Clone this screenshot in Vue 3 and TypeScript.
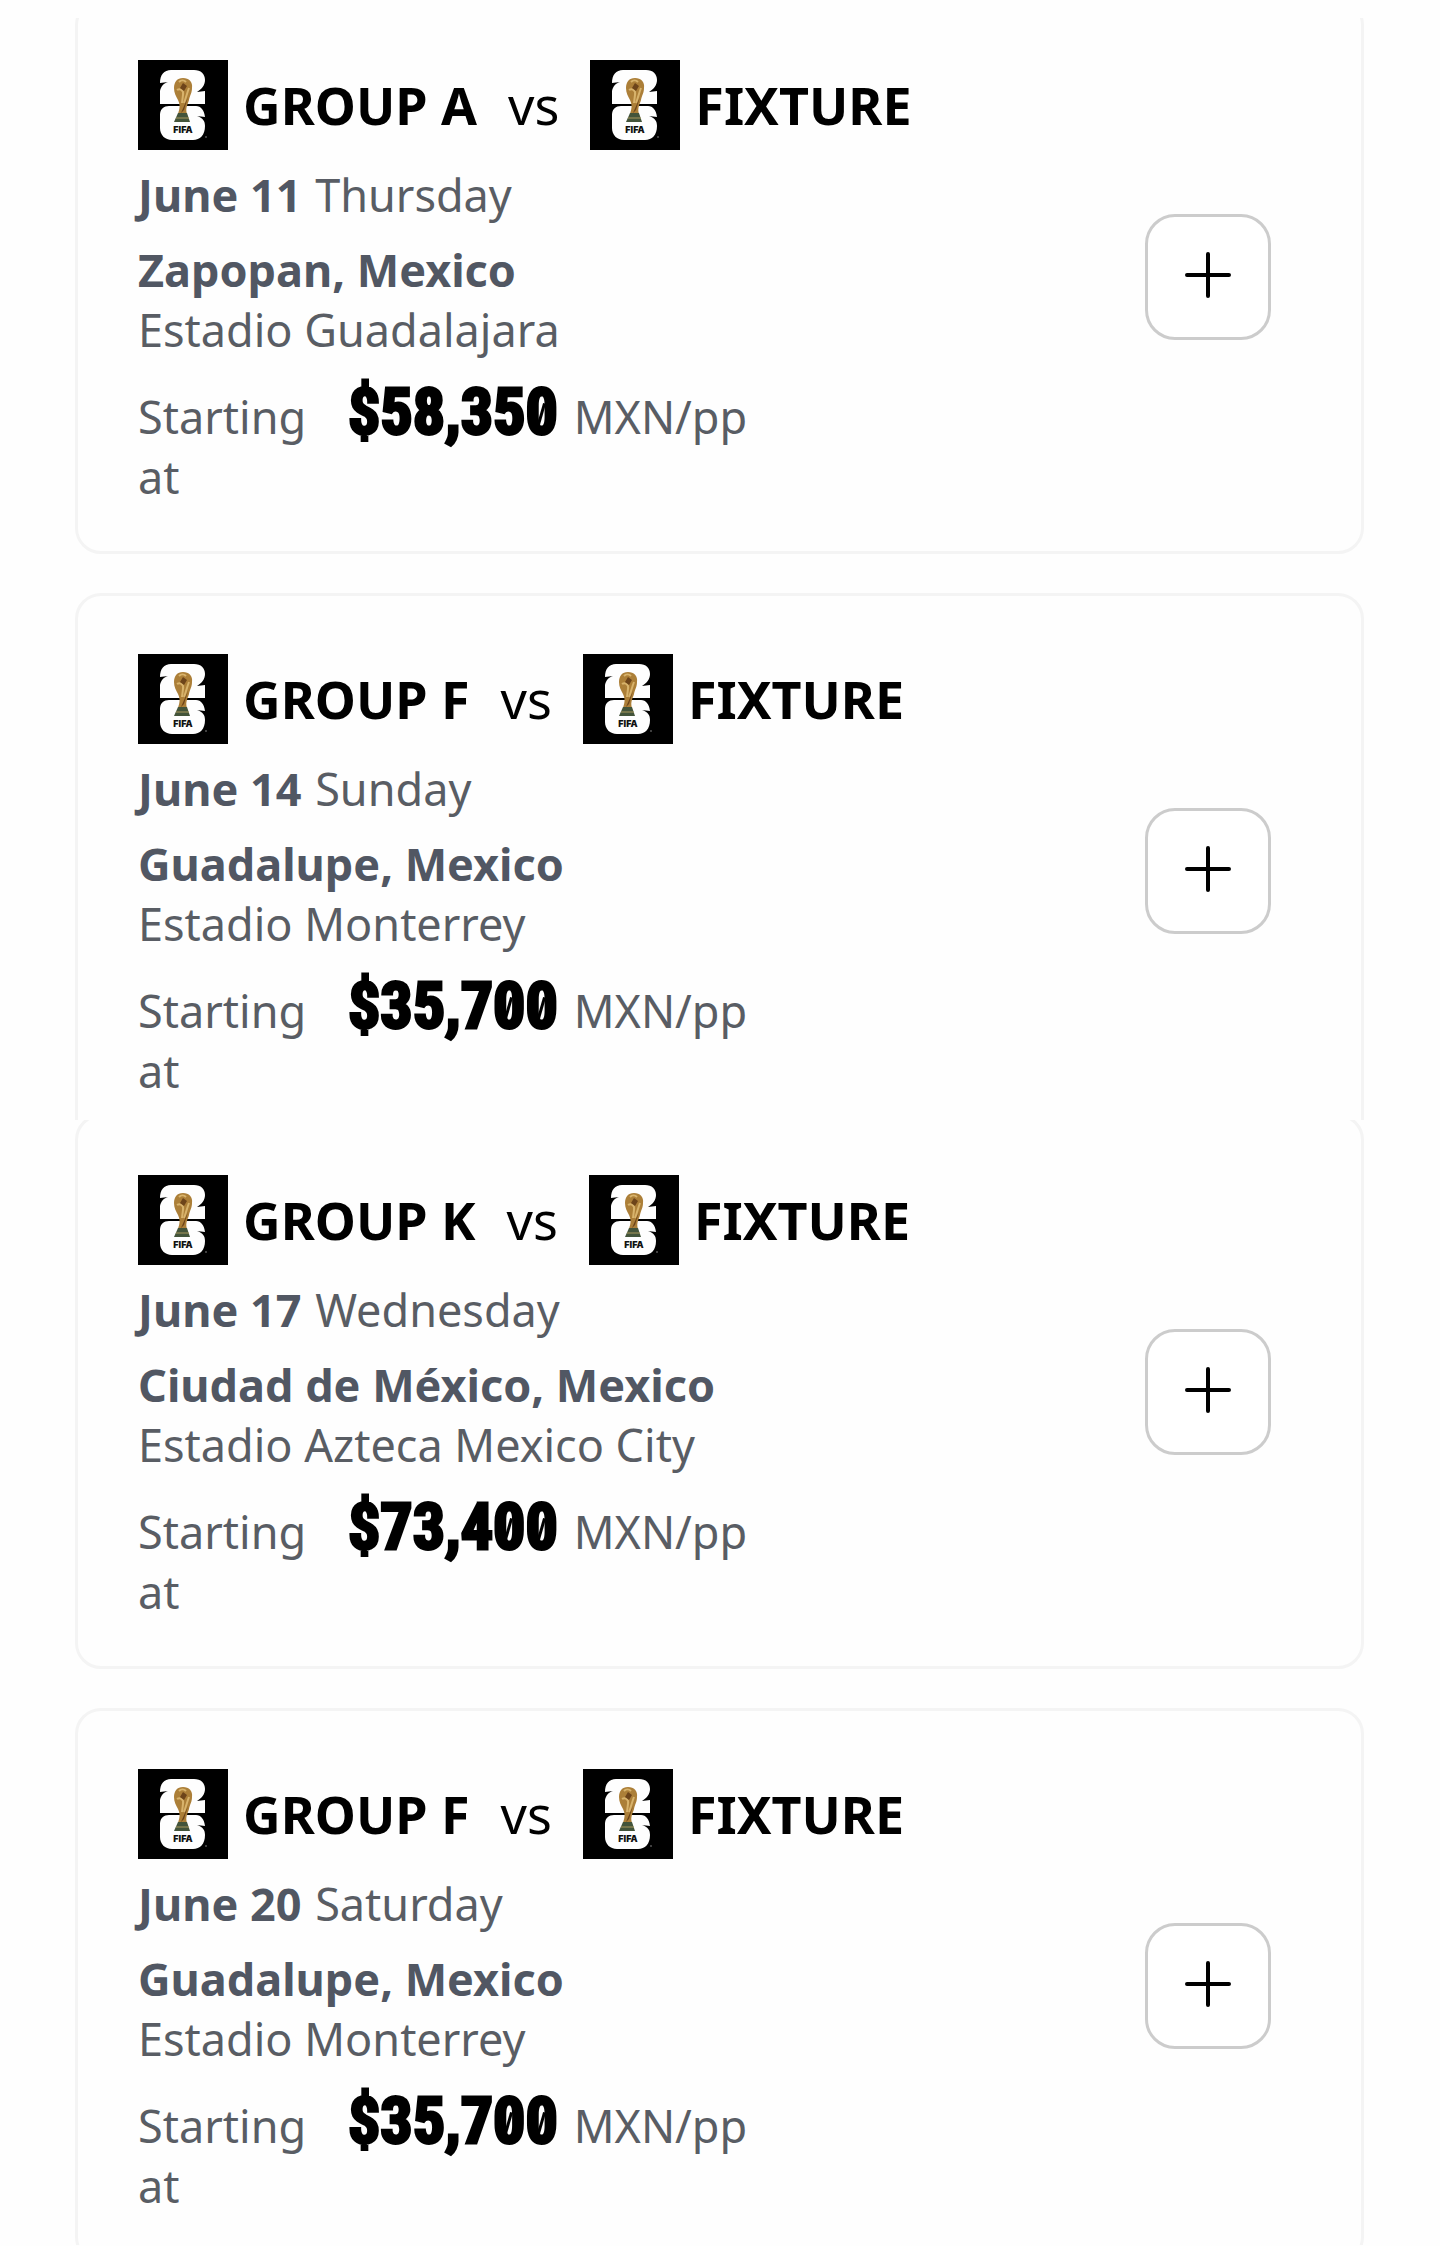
<script setup lang="ts">
interface Match {
  group: string
  date: string
  day: string
  city: string
  venue: string
  price: string
}

const sections: Match[][] = [
  [
    { group: 'GROUP A', date: 'June 11', day: 'Thursday', city: 'Zapopan, Mexico', venue: 'Estadio Guadalajara', price: '$58,350' },
    { group: 'GROUP F', date: 'June 14', day: 'Sunday', city: 'Guadalupe, Mexico', venue: 'Estadio Monterrey', price: '$35,700' },
  ],
  [
    { group: 'GROUP K', date: 'June 17', day: 'Wednesday', city: 'Ciudad de México, Mexico', venue: 'Estadio Azteca Mexico City', price: '$73,400' },
    { group: 'GROUP F', date: 'June 20', day: 'Saturday', city: 'Guadalupe, Mexico', venue: 'Estadio Monterrey', price: '$35,700' },
  ],
]
</script>

<template>
  <main class="page">
    <section v-for="(matches, s) in sections" :key="s" class="sheet">
      <article v-for="m in matches" :key="m.date" class="card">
        <div class="info">
          <h2 class="teams">
            <template v-for="(name, i) in [m.group, 'FIXTURE']" :key="name">
              <span v-if="i" class="vs">vs</span>
              <span class="team">
                <svg class="logo" viewBox="0 0 90 90" aria-hidden="true">
                  <rect width="90" height="90" fill="#000" />
                  <path d="M33 10h23c7 0 11 4 11 10 0 5-3 9-8 12l8-1v13H22V31c1-5 4-8 8-9l-8 1c0-8 4-13 11-13z" fill="#fefefe" />
                  <path d="M31 46h27c5 0 8 4 9 11l-8-1c6 2 8 5 8 10 0 9-5 14-12 14H34c-7 0-12-5-12-12V55c0-6 4-9 9-9z" fill="#fefefe" />
                  <path d="M45 18c6 0 10 4 9 10 0 5-2 7-3 12-1 4-4 8-2 14h-9c1-4 3-8 0-14-2-4-4-7-4-12 0-6 3-10 9-10z" fill="#ac7f38" />
                  <path d="M41 22c2-2 5-2 7 0M39 30c3-2 7 0 6 5l-1 8M51 28c-2 5-3 10-5 15" fill="none" stroke="#d8b36c" stroke-width="2" />
                  <path d="M45 23l4 3-3 5-4-3zM50 37l-4 13-3 3" fill="#6d441a" />
                  <path d="M40 53h9l3 9H36z" fill="#43543a" />
                  <path d="M38 58h13" stroke="#a8975c" stroke-width="1" />
                  <text x="45" y="73" text-anchor="middle" class="mark">FIFA</text>
                  <circle cx="68" cy="77" r="1" fill="#555" />
                </svg>
                {{ name }}
              </span>
            </template>
          </h2>
          <p class="line"><strong class="date">{{ m.date }}</strong> {{ m.day }}</p>
          <p class="line"><strong>{{ m.city }}</strong><br />{{ m.venue }}</p>
          <div class="cost">
            <span class="label">Starting at</span>
            <span class="price"><span v-for="(c, i) in m.price" :key="i" :class="{ zero: c === '0' }">{{ c }}</span></span>
            <span>MXN/pp</span>
          </div>
        </div>
        <button class="add" type="button" :aria-label="`Add ${m.group}, ${m.date}`">
          <svg viewBox="0 0 48 48" aria-hidden="true"><path d="M24 3v42M3 24h42" /></svg>
        </button>
      </article>
    </section>
  </main>
</template>

<style>
body {
  background: #fefefe;
}
</style>

<style scoped>
.page {
  padding: 18px 76px 0 75px;
  color: #595d64;
  font: 45px/60px 'Noto Sans', sans-serif;
}
.sheet {
  display: flex;
  flex-direction: column;
  gap: 39px;
  overflow: hidden;
}
.sheet:first-child .card:first-child {
  margin-top: -19px;
}
.sheet:first-child .card:last-child {
  margin-bottom: -28px;
}
.sheet:last-child .card:first-child {
  margin-top: -6px;
}
.sheet:last-child .card:last-child {
  margin-bottom: -18px;
}
.card {
  display: flex;
  align-items: center;
  justify-content: space-between;
  padding: 44px 90px 44px 60px;
  border: 3px solid #f4f4f4;
  border-radius: 26px;
}
.info {
  display: flex;
  flex-direction: column;
  gap: 15px;
  padding-top: 14px;
}
.teams {
  display: flex;
  align-items: center;
  gap: 31px;
  margin: 0;
  color: #000;
  font-size: 52px;
}
.team {
  display: flex;
  align-items: center;
  gap: 15px;
}
.vs {
  font-weight: 400;
}
.logo {
  width: 90px;
  height: 90px;
}
.mark {
  fill: #111;
  font: 900 9px Inter, sans-serif;
}
.line {
  margin: 0;
}
strong {
  color: #515763;
}
.date {
  margin-right: 2px;
}
.cost {
  display: flex;
  align-items: baseline;
}
.label {
  width: 210px;
}
.price {
  margin-right: 16px;
  color: #000;
  font: bold 64px/76px 'Roboto Condensed', 'Noto Sans ExtraCondensed', 'Noto Sans Condensed', 'Open Sans Condensed', 'Liberation Sans Narrow', 'Roboto', sans-serif;
  -webkit-text-stroke: 3px #000;
}
.zero {
  position: relative;
}
.zero::after {
  content: '';
  position: absolute;
  top: 50%;
  left: 50%;
  width: 3px;
  height: 22px;
  margin: -10px 0 0 -2px;
  background: #000;
  transform: rotate(16deg);
}
.add {
  display: grid;
  place-items: center;
  flex: none;
  width: 126px;
  height: 126px;
  padding: 0 0 4px;
  border: 3px solid #ccc;
  border-radius: 30px;
  background: #fff;
}
.add svg {
  width: 48px;
  height: 48px;
  fill: none;
  stroke: #000;
  stroke-width: 4;
  stroke-linecap: round;
}
</style>
